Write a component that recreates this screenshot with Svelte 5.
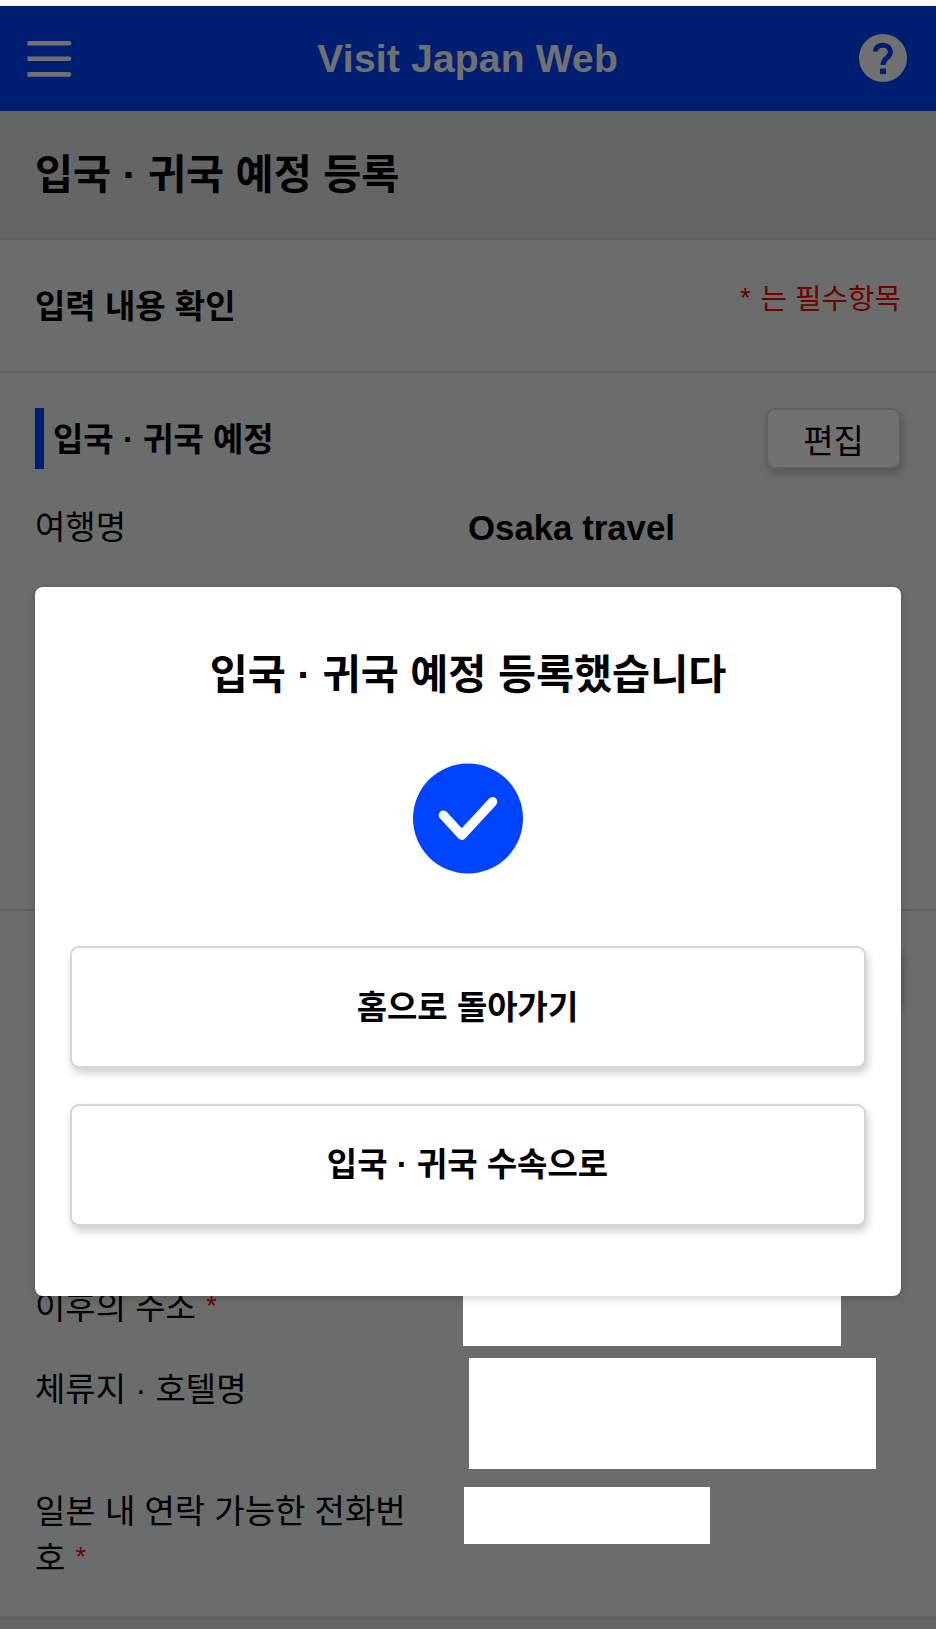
<script>
    let title = "입국 · 귀국 예정 등록";

    let stay = [
        { label: "이후의 주소", required: true, kind: "address" },
        { label: "체류지 · 호텔명", required: false, kind: "hotel" },
        { label: "일본 내 연락 가능한 전화번호", required: true, kind: "phone" },
    ];

    let actions = ["홈으로 돌아가기", "입국 · 귀국 수속으로"];
</script>

<div class="screen">
    <div class="page">
        <header>
            <button class="menu" aria-label="menu">
                <svg width="45" height="38" viewBox="0 0 45 38">
                    <path
                        d="M.5 3.2H42M.5 18.8H42M.5 34.4H42"
                        stroke="#fff"
                        stroke-width="4.6"
                    />
                    <g fill="#fff">
                        <circle cx="42" cy="3.2" r="2.3" />
                        <circle cx="42" cy="18.8" r="2.3" />
                        <circle cx="42" cy="34.4" r="2.3" />
                    </g>
                </svg>
            </button>
            <span class="brand">Visit Japan Web</span>
            <button class="help" aria-label="help">
                <svg width="48" height="48" viewBox="0 0 48 48">
                    <circle cx="24" cy="24" r="24" fill="#fff" />
                    <path
                        d="M16.4 17.5C16.4 13.5 19.6 11.2 24 11.2S31.4 14 31.4 18.2C31.4 23.6 24 24 24 31"
                        fill="none"
                        stroke="#04f"
                        stroke-width="5"
                    />
                    <rect x="21" y="34.6" width="6" height="5.6" fill="#04f" />
                </svg>
            </button>
        </header>

        <h1>{title}</h1>

        <div class="subhead">
            <h2>입력 내용 확인</h2>
            <span class="note"><i>*</i> 는 필수항목</span>
        </div>

        <section class="plan">
            <div class="section-head">
                <h3>입국 · 귀국 예정</h3>
                <button class="edit">편집</button>
            </div>
            <div class="row">
                <span class="label">여행명</span>
                <span class="value">Osaka travel</span>
            </div>
        </section>

        <section class="stay">
            <div class="section-head end">
                <button class="edit" aria-label="edit"></button>
            </div>
            {#each stay as item}
                <div class="row {item.kind}">
                    <span class="label">
                        {item.label}{#if item.required}&nbsp;<i>*</i>{/if}
                    </span>
                </div>
            {/each}
        </section>
    </div>

    <div class="overlay"></div>

    <!-- hidden personal details -->
    <div class="mask mask-address"></div>
    <div class="mask mask-hotel"></div>
    <div class="mask mask-phone"></div>

    <div class="modal" role="dialog">
        <p class="message">입국 · 귀국 예정 등록했습니다</p>
        <svg class="check" width="110" height="111" viewBox="0 0 110 111">
            <circle cx="55" cy="55.5" r="55" fill="#04f" />
            <path
                d="M30.4 52.2L48.7 72.2L79.6 38.7"
                fill="none"
                stroke="#fff"
                stroke-width="9.4"
                stroke-linecap="round"
                stroke-linejoin="round"
            />
        </svg>
        <div class="actions">
            {#each actions as action}
                <button>{action}</button>
            {/each}
        </div>
    </div>
</div>

<style>
    :global(body) {
        margin: 0;
        background: #fff;
    }

    .screen {
        position: relative;
        width: 936px;
        height: 1629px;
        box-sizing: border-box;
        padding-top: 6px;
        overflow: hidden;
        font-family: "Liberation Sans", "Noto Sans CJK KR", sans-serif;
        font-size: 33px;
        color: #000;
    }

    .page {
        height: 1623px;
        background: #e2e6e4;
    }

    button {
        font: inherit;
        color: inherit;
        padding: 0;
        border: 0;
        background: none;
        box-sizing: border-box;
    }

    h1,
    h2,
    h3,
    p {
        margin: 0;
        font-weight: bold;
    }

    i {
        margin-left: 1px;
        font-size: 27px;
        font-style: normal;
        line-height: 1;
        vertical-align: 4px;
        color: #f00;
    }

    header {
        display: flex;
        align-items: center;
        justify-content: space-between;
        height: 105px;
        box-sizing: border-box;
        padding: 0 28.6px 0 27px;
        background: #04f;
    }

    header svg {
        display: block;
    }

    .help {
        margin-bottom: 1px;
    }

    .brand {
        padding-left: 4px;
        font-size: 39px;
        font-weight: bold;
        letter-spacing: 0.2px;
        color: #fff;
    }

    h1 {
        height: 127px;
        padding-left: 35px;
        font-size: 41.4px;
        line-height: 128px;
        border-bottom: 2px solid #d8d8d8;
    }

    .subhead {
        display: flex;
        justify-content: space-between;
        height: 131px;
        padding: 0 35px;
        background: #f2f6f4;
        border-bottom: 2px solid #d8d8d8;
    }

    h2 {
        font-size: 33px;
        line-height: 134px;
    }

    .note {
        font-size: 28.8px;
        line-height: 119px;
        color: #f00;
    }

    .note i {
        margin-right: 2px;
        vertical-align: 2px;
    }

    section {
        background: #f2f6f4;
        box-sizing: border-box;
        padding: 35px 35px 0;
    }

    .plan {
        height: 538px;
        border-bottom: 2px solid #d8d8d8;
    }

    .stay {
        height: 709px;
        border-bottom: 4px solid #d8d8d8;
    }

    .section-head {
        display: flex;
        justify-content: space-between;
        align-items: flex-start;
    }

    .section-head.end {
        justify-content: flex-end;
    }

    h3 {
        height: 61px;
        padding-left: 9px;
        border-left: 9px solid #04f;
        font-size: 33px;
        line-height: 63px;
    }

    .edit {
        width: 135px;
        height: 61px;
        border: 2px solid #d8d8d8;
        border-radius: 9px;
        background: #fff;
        box-shadow: 2px 5px 8px rgba(0, 0, 0, 0.22);
    }

    .row {
        display: grid;
        grid-template-columns: 433px 1fr;
        line-height: 47px;
    }

    .label {
        padding-right: 55px;
        word-break: break-all;
    }

    .plan .row {
        margin-top: 35px;
    }

    .value {
        font-size: 34.8px;
        font-weight: bold;
    }

    .address {
        margin-top: 277px;
    }

    .hotel {
        margin-top: 35px;
    }

    .phone {
        margin-top: 75px;
    }

    .overlay {
        position: absolute;
        inset: 6px 0 0;
        background: rgba(0, 0, 0, 0.556);
    }

    .mask {
        position: absolute;
        background: #fff;
    }

    .mask-address {
        left: 463px;
        top: 1280px;
        width: 378px;
        height: 66px;
    }

    .mask-hotel {
        left: 468.5px;
        top: 1358.4px;
        width: 407.5px;
        height: 110.2px;
    }

    .mask-phone {
        left: 464.3px;
        top: 1486.7px;
        width: 245.7px;
        height: 57.8px;
    }

    .modal {
        position: absolute;
        left: 35px;
        top: 587px;
        width: 866px;
        height: 708.5px;
        box-sizing: border-box;
        padding: 58px 35px 0;
        display: flex;
        flex-direction: column;
        align-items: center;
        background: #fff;
        border-radius: 8px;
        box-shadow: 0 2px 8px rgba(0, 0, 0, 0.2);
    }

    .message {
        font-size: 41.4px;
        line-height: 60px;
    }

    .check {
        margin-top: 58px;
    }

    .actions {
        display: flex;
        flex-direction: column;
        gap: 35.5px;
        align-self: stretch;
        margin-top: 72px;
    }

    .actions button {
        height: 122px;
        padding: 0 1px 5px 0;
        border: 2px solid #d5d5d5;
        border-radius: 9px;
        background: #fff;
        box-shadow: 2px 5px 8px rgba(0, 0, 0, 0.2);
        font-weight: bold;
    }
</style>
